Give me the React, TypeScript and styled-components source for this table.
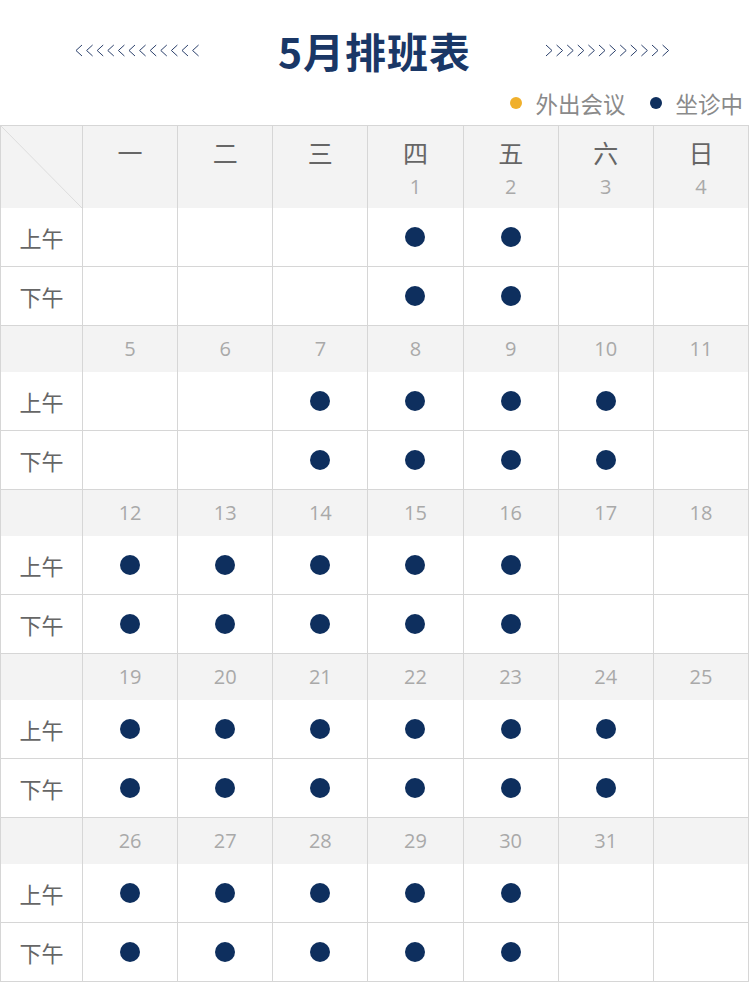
import React from "react";
import styled, { createGlobalStyle } from "styled-components";

const Global = createGlobalStyle`
  html, body { margin: 0; padding: 0; background: #fff; }
  body { font-family: "Open Sans", "Noto Sans CJK SC", sans-serif; }
`;

const Page = styled.div`
  width: 749px;
  background: #fff;
`;

const TitleBar = styled.div`
  height: 88px;
  display: flex;
  align-items: center;
  justify-content: center;
  gap: 74px;
  padding-top: 12px;
  box-sizing: border-box;
`;

const Title = styled.h1`
  margin: 0;
  font-family: "Noto Sans CJK SC", sans-serif;
  font-weight: 700;
  font-size: 41px;
  line-height: 1;
  color: #1a3766;
  letter-spacing: 1px;
`;

const Legend = styled.div`
  height: 37px;
  display: flex;
  justify-content: flex-end;
  align-items: center;
  gap: 25px;
  padding-right: 6px;
  padding-bottom: 7px;
  box-sizing: border-box;
`;

const LegendItem = styled.div`
  display: flex;
  align-items: center;
  gap: 13px;
  font-family: "Noto Sans CJK SC", sans-serif;
  font-size: 22.5px;
  color: #8a8a8a;
  line-height: 1;
`;

const LegendDot = styled.span<{ $color: string }>`
  width: 12px;
  height: 12px;
  border-radius: 50%;
  background: ${(p) => p.$color};
  display: inline-block;
`;

const Grid = styled.div`
  display: grid;
  grid-template-columns: 82px repeat(7, 1fr);
  width: 749px;
  box-sizing: border-box;
  border-top: 1px solid #d6d6d6;
  border-left: 1px solid #d6d6d6;
`;

const Cell = styled.div<{ $kind: "head" | "date" | "slot"; $corner?: boolean }>`
  box-sizing: border-box;
  border-right: 1px solid #d6d6d6;
  border-bottom: ${(p) => (p.$kind === "slot" ? "1px solid #d6d6d6" : "none")};
  background: ${(p) => (p.$kind === "slot" ? "#fff" : "#f3f3f3")};
  height: ${(p) => (p.$kind === "head" ? "82px" : p.$kind === "date" ? "46px" : "59px")};
  display: flex;
  flex-direction: column;
  align-items: center;
  justify-content: center;
  ${(p) =>
    p.$corner
      ? `background-image: linear-gradient(to top right, transparent calc(50% - 0.7px), #dcdcdc 50%, transparent calc(50% + 0.7px));`
      : ""}
`;

const HeadCell = styled(Cell)`
  justify-content: flex-start;
  padding-top: 11px;
`;

const Weekday = styled.div`
  font-family: "Noto Sans CJK SC", sans-serif;
  font-size: 25px;
  line-height: 30px;
  color: #666;
`;

const DateNum = styled.div<{ $inHead?: boolean }>`
  font-family: "Open Sans", sans-serif;
  font-size: 20px;
  line-height: 1;
  color: #a9a9a9;
  margin-top: ${(p) => (p.$inHead ? "10px" : "0")};
`;

const SlotLabel = styled.div`
  font-family: "Noto Sans CJK SC", sans-serif;
  font-size: 22px;
  color: #666;
  line-height: 1;
`;

const Dot = styled.span`
  width: 20px;
  height: 20px;
  border-radius: 50%;
  background: #0e2f5e;
  display: block;
`;

const Chevrons: React.FC<{ dir: "left" | "right" }> = ({ dir }) => {
  const n = 12;
  const pitch = 10.6;
  const w = 6;
  const h = 11;
  const lines = [];
  for (let i = 0; i < n; i++) {
    const x0 = 1 + i * pitch;
    const pts =
      dir === "left"
        ? `${x0 + w},1 ${x0},${1 + h / 2} ${x0 + w},${1 + h}`
        : `${x0},1 ${x0 + w},${1 + h / 2} ${x0},${1 + h}`;
    lines.push(<polyline key={i} points={pts} fill="none" stroke="#2a3f6a" strokeWidth={1} />);
  }
  return (
    <svg width={n * pitch + 2} height={h + 2} viewBox={`0 0 ${n * pitch + 2} ${h + 2}`}>
      {lines}
    </svg>
  );
};

const WEEKDAYS = ["一", "二", "三", "四", "五", "六", "日"];

type Week = { dates: (number | null)[]; am: boolean[]; pm: boolean[] };

const WEEKS: Week[] = [
  {
    dates: [null, null, null, 1, 2, 3, 4],
    am: [false, false, false, true, true, false, false],
    pm: [false, false, false, true, true, false, false],
  },
  {
    dates: [5, 6, 7, 8, 9, 10, 11],
    am: [false, false, true, true, true, true, false],
    pm: [false, false, true, true, true, true, false],
  },
  {
    dates: [12, 13, 14, 15, 16, 17, 18],
    am: [true, true, true, true, true, false, false],
    pm: [true, true, true, true, true, false, false],
  },
  {
    dates: [19, 20, 21, 22, 23, 24, 25],
    am: [true, true, true, true, true, true, false],
    pm: [true, true, true, true, true, true, false],
  },
  {
    dates: [26, 27, 28, 29, 30, 31, null],
    am: [true, true, true, true, true, false, false],
    pm: [true, true, true, true, true, false, false],
  },
];

const SlotRow: React.FC<{ label: string; marks: boolean[]; prefix: string }> = ({ label, marks, prefix }) => (
  <>
    <Cell $kind="slot">
      <SlotLabel>{label}</SlotLabel>
    </Cell>
    {marks.map((m, i) => (
      <Cell key={`${prefix}-${i}`} $kind="slot">
        {m ? <Dot /> : null}
      </Cell>
    ))}
  </>
);

export default function App() {
  return (
    <Page>
      <Global />
      <TitleBar>
        <Chevrons dir="left" />
        <Title>5月排班表</Title>
        <Chevrons dir="right" />
      </TitleBar>
      <Legend>
        <LegendItem>
          <LegendDot $color="#f0b02c" />
          外出会议
        </LegendItem>
        <LegendItem>
          <LegendDot $color="#0e2f5e" />
          坐诊中
        </LegendItem>
      </Legend>
      <Grid>
        <Cell $kind="head" $corner />
        {WEEKDAYS.map((d, i) => (
          <HeadCell key={d} $kind="head">
            <Weekday>{d}</Weekday>
            {WEEKS[0].dates[i] !== null ? <DateNum $inHead>{WEEKS[0].dates[i]}</DateNum> : null}
          </HeadCell>
        ))}
        <SlotRow label="上午" marks={WEEKS[0].am} prefix="w0am" />
        <SlotRow label="下午" marks={WEEKS[0].pm} prefix="w0pm" />
        {WEEKS.slice(1).map((w, wi) => (
          <React.Fragment key={wi}>
            <Cell $kind="date" />
            {w.dates.map((d, i) => (
              <Cell key={`d${wi}-${i}`} $kind="date">
                {d !== null ? <DateNum>{d}</DateNum> : null}
              </Cell>
            ))}
            <SlotRow label="上午" marks={w.am} prefix={`w${wi}am`} />
            <SlotRow label="下午" marks={w.pm} prefix={`w${wi}pm`} />
          </React.Fragment>
        ))}
      </Grid>
    </Page>
  );
}
